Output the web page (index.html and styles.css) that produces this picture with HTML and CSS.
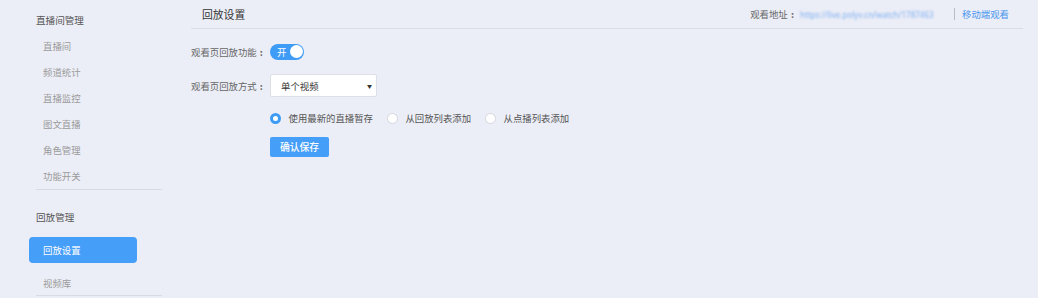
FILE: index.html
```html
<!DOCTYPE html>
<html lang="zh-CN">
<head>
<meta charset="utf-8">
<title>回放设置</title>
<link rel="stylesheet" href="styles.css">
</head>
<body>
<div class="layout">
  <aside class="sidebar">
    <div class="group">
      <div class="group-title">直播间管理</div>
      <div class="nav-item">直播间</div>
      <div class="nav-item">频道统计</div>
      <div class="nav-item">直播监控</div>
      <div class="nav-item">图文直播</div>
      <div class="nav-item">角色管理</div>
      <div class="nav-item">功能开关</div>
    </div>
    <div class="group group-second">
      <div class="group-title">回放管理</div>
      <div class="nav-item active">回放设置</div>
      <div class="nav-item nav-last">视频库</div>
    </div>
  </aside>
  <main class="main">
    <header class="main-header">
      <h1 class="title">回放设置</h1>
      <div class="watch">
        <span class="watch-label">观看地址<span class="colon">:</span></span>
        <span class="watch-url">https://live.polyv.cn/watch/1787463</span>
        <span class="sep"></span>
        <a class="watch-mobile">移动端观看</a>
      </div>
    </header>
    <section class="form">
      <div class="form-row row-switch">
        <span class="label">观看页回放功能<span class="colon">:</span></span>
        <span class="switch"><span class="switch-text">开</span><span class="knob"></span></span>
      </div>
      <div class="form-row row-select">
        <span class="label">观看页回放方式<span class="colon">:</span></span>
        <span class="select"><span>单个视频</span><span class="caret">▼</span></span>
      </div>
      <div class="form-row row-radio">
        <span class="label"></span>
        <span class="radio checked"></span><span class="radio-text">使用最新的直播暂存</span>
        <span class="radio"></span><span class="radio-text">从回放列表添加</span>
        <span class="radio"></span><span class="radio-text">从点播列表添加</span>
      </div>
      <div class="form-row row-btn">
        <span class="label"></span>
        <button class="btn">确认保存</button>
      </div>
    </section>
  </main>
</div>
</body>
</html>
```

FILE: styles.css
```css
html, body {
  margin: 0;
  padding: 0;
  background: #eceef7;
  font-family: "Noto Sans CJK SC", "Noto Sans", sans-serif;
  font-size: 9.4px;
  color: #666;
}

.layout {
  display: flex;
  height: 298px;
  overflow: hidden;
}

.sidebar {
  width: 191px;
  flex: none;
  padding-left: 29px;
  padding-top: 7px;
  box-sizing: border-box;
}

.group {
  width: 133px;
}

.group-title {
  padding-left: 7px;
  line-height: 26px;
  color: #555;
  font-size: 9.6px;
}

.nav-item {
  margin-left: 7px;
  padding-left: 7px;
  line-height: 26px;
  color: #9a9a9a;
}

.group > .nav-item:last-child {
  border-bottom: 1px solid #d8dbe4;
  width: 119px;
}

.group-second {
  margin-top: 14px;
}

.nav-item.active {
  margin-left: 0;
  padding-left: 14px;
  width: 94px;
  background: #459ef8;
  color: #fff;
  border-radius: 4px;
  margin-top: 7px;
  margin-bottom: 8px;
}

.group > .nav-item.nav-last {
  line-height: 24px;
}

.main {
  width: 832px;
  flex: none;
}

.main-header {
  display: flex;
  align-items: center;
  justify-content: space-between;
  height: 28px;
  border-bottom: 1px solid #dadde6;
  padding: 0 14px 0 11px;
}

.title {
  margin: 0;
  font-size: 10.8px;
  font-weight: normal;
  color: #333;
}

.watch {
  display: flex;
  align-items: center;
}

.watch-label {
  color: #666;
}

.colon {
  display: inline-block;
  width: 1em;
  text-align: center;
  font-weight: bold;
}

.watch-url {
  color: #7fb0f0;
  filter: blur(1.2px);
  font-family: "Noto Sans", sans-serif;
  font-size: 8px;
  margin-left: 3px;
  width: 150px;
  overflow: hidden;
  white-space: nowrap;
}

.sep {
  width: 1px;
  height: 12px;
  background: #b8bcc6;
  margin: 0 7px 0 4px;
}

.watch-mobile {
  color: #4a96ee;
}

.form-row {
  display: flex;
  align-items: center;
}

.label {
  width: 79px;
  flex: none;
  color: #666;
}

.row-switch {
  margin-top: 14px;
  height: 17px;
}

.switch {
  display: flex;
  align-items: center;
  justify-content: space-between;
  width: 34px;
  height: 16px;
  border-radius: 8px;
  background: #3f9cf6;
  box-sizing: border-box;
  padding: 0 1.5px 0 7px;
}

.switch-text {
  color: #fff;
  font-size: 9.4px;
  line-height: 16px;
}

.knob {
  width: 13px;
  height: 13px;
  border-radius: 50%;
  background: #fff;
}

.row-select {
  margin-top: 14px;
}

.select {
  display: flex;
  align-items: center;
  justify-content: space-between;
  width: 107px;
  height: 23px;
  box-sizing: border-box;
  background: #fff;
  border: 1px solid #dcdfe6;
  border-radius: 2px;
  padding: 0 4px 0 10px;
  color: #333;
}

.caret {
  font-size: 5px;
  color: #333;
}

.row-radio {
  margin-top: 15px;
  height: 12px;
}

.radio {
  width: 11px;
  height: 11px;
  box-sizing: border-box;
  border-radius: 50%;
  border: 1px solid #d4d7de;
  background: #fff;
  flex: none;
}

.radio.checked {
  border: 3.5px solid #3f9cf6;
  background: #fff;
}

.radio-text {
  margin-left: 7.5px;
  margin-right: 14px;
  color: #555;
}

.row-btn {
  margin-top: 13px;
}

.btn {
  height: 20px;
  width: 59px;
  padding: 0;
  border: none;
  border-radius: 2px;
  background: #459ef8;
  color: #fff;
  font-family: "Noto Sans CJK SC", "Noto Sans", sans-serif;
  font-size: 9.8px;
  font-weight: 500;
}
```
